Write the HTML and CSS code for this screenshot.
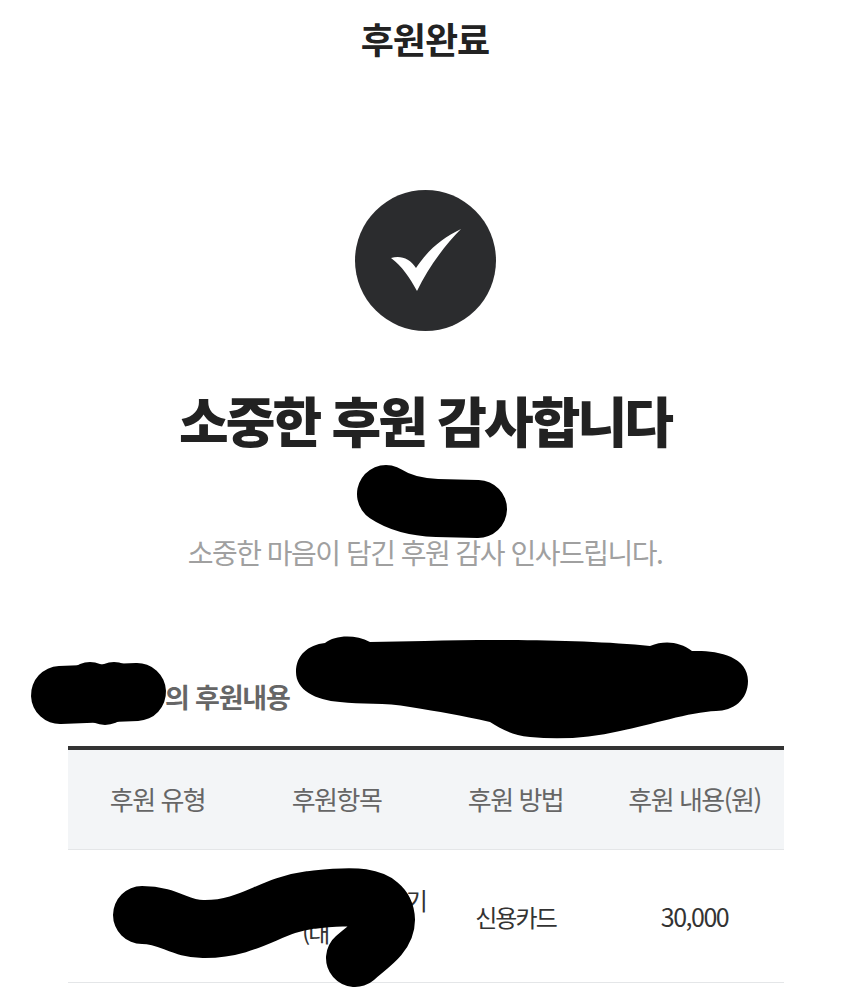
FILE: index.html
```html
<!DOCTYPE html>
<html lang="ko">

<head>
  <meta charset="UTF-8" />
  <title>후원완료</title>
  <link rel="stylesheet" href="styles.css">
</head>

<body>
  <div class="page">
    <h1 class="pageTitle">후원완료</h1>

    <svg class="doneIcon" viewBox="0 0 141 141" aria-hidden="true">
      <circle cx="70.5" cy="70.5" r="70.5" fill="#2b2c2e" />
      <path d="M36 68 C45 65 55 68 61 78 C73 60 87 48 106 39 C90 55 73 78 62 101 C55 88 47 76 36 68 Z" fill="#fff" />
    </svg>

    <h2 class="thanks">소중한 후원 감사합니다</h2>
    <p class="thanksSub">소중한 마음이 담긴 후원 감사 인사드립니다.</p>

    <div class="sectionTitle">의 후원내용</div>

    <div class="summary">
      <div class="summaryRow summaryHead">
        <div>후원 유형</div>
        <div>후원항목</div>
        <div>후원 방법</div>
        <div>후원 내용(원)</div>
      </div>
      <div class="summaryRow summaryBody">
        <div></div>
        <div class="itemCell">
          <span class="itemTop">기</span>
          <span class="itemBottom">(대</span>
        </div>
        <div>신용카드</div>
        <div class="amount">30,000</div>
      </div>
    </div>

    <!-- black marker over the personal details -->
    <svg class="marker" viewBox="0 0 850 999" aria-hidden="true">
      <path class="markerLine" d="M386 494 C395 500 410 507 437 508 L478 509" />
      <path class="markerLine" d="M60 695 L137 692" />
      <circle cx="90" cy="688" r="26" />
      <circle cx="114" cy="688" r="26" />
      <circle cx="105" cy="697" r="28" />
      <path d="M296 672 C296 655 308 645 325 643 C335 635 355 634 370 642 L425 641 C500 639 590 640 650 646 C665 640 680 642 692 651 C715 650 748 655 748 681 C748 700 733 711 716 711 C690 712 650 725 620 731 C590 738 560 740 530 737 C510 735 500 728 490 722 C460 715 440 712 410 707 C385 702 360 705 340 702 C315 700 296 690 296 672 Z" />
      <path class="markerLine" d="M142 915 C170 915 180 930 205 929 C250 929 270 905 310 900 C340 897 385 890 386 920 C386 935 370 945 355 958" />
    </svg>
  </div>
</body>

</html>
```

FILE: styles.css
```css
body {
  margin: 0;
  background-color: #fff;
  color: #222;
  font-family: 'Noto Sans CJK KR', 'Noto Sans', sans-serif;
}

.page {
  position: relative;
  height: 999px;
  overflow: hidden;
  display: flex;
  flex-direction: column;
  align-items: center;
}

.pageTitle {
  margin: 14px 0 0;
  font-size: 36px;
  line-height: 48px;
  font-weight: 700;
  letter-spacing: -1px;
}

.doneIcon {
  display: block;
  width: 141px;
  height: 141px;
  margin-top: 128px;
}

.thanks {
  margin: 53px 0 0;
  font-size: 54px;
  line-height: 72px;
  font-weight: 900;
  letter-spacing: -2.9px;
}

.thanksSub {
  margin: 77px 0 0;
  font-size: 28px;
  line-height: 38px;
  font-weight: 400;
  letter-spacing: -1.5px;
  color: #a0a0a0;
}

.sectionTitle {
  align-self: flex-start;
  margin: 108px 0 0 165px;
  font-size: 27px;
  line-height: 36px;
  font-weight: 700;
  letter-spacing: -1.2px;
  color: #666;
}

.summary {
  width: 716px;
  margin: 31px 0 0 2px;
  border-top: 4px solid #333;
}

.summaryRow {
  display: grid;
  grid-template-columns: repeat(4, 1fr);
  align-items: center;
  text-align: center;
  letter-spacing: -1.5px;
  border-bottom: 1px solid #e4e6e8;
}

.summaryHead {
  height: 100px;
  padding-bottom: 3px;
  box-sizing: border-box;
  background-color: #f3f5f7;
  font-size: 26px;
  color: #666;
}

.summaryBody {
  height: 132px;
  font-size: 24px;
  letter-spacing: -1.9px;
  color: #333;
}

.amount {
  font-size: 25px;
  letter-spacing: -1.5px;
}

.itemCell {
  display: flex;
  flex-direction: column;
  gap: 4px;
  text-align: left;
  line-height: 28px;
}

.itemTop {
  text-align: right;
}

.itemBottom {
  padding-left: 55px;
}

.marker {
  position: absolute;
  top: 0;
  left: 0;
  width: 850px;
  height: 999px;
  pointer-events: none;
}

.markerLine {
  fill: none;
  stroke: #000;
  stroke-width: 58;
  stroke-linecap: round;
  stroke-linejoin: round;
}
```
